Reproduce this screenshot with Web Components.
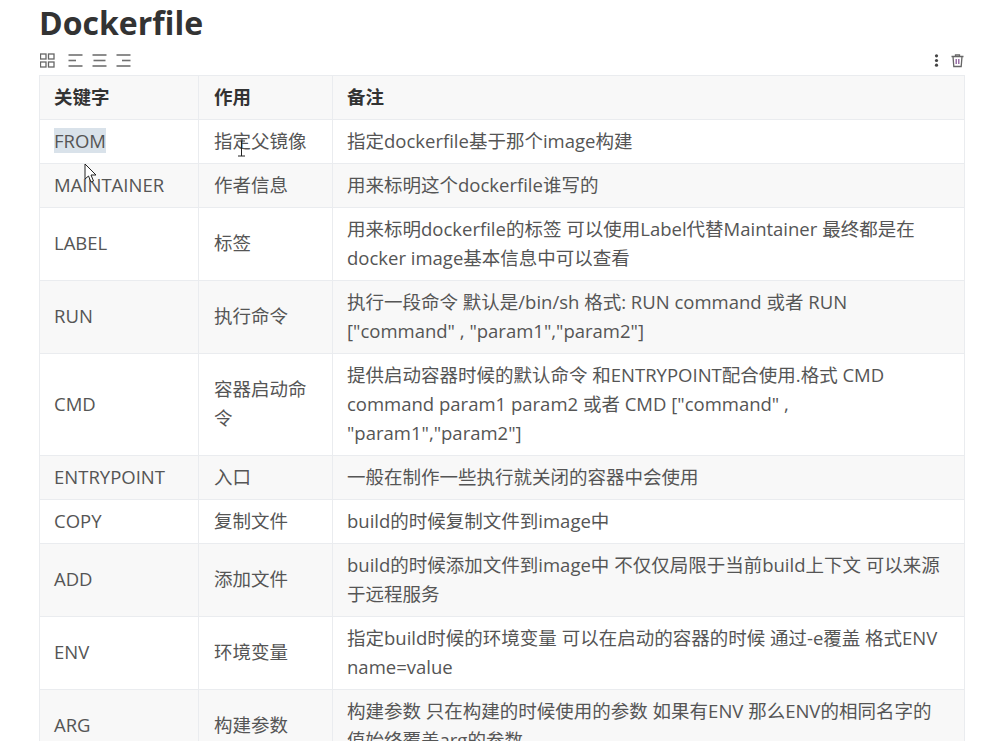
<!DOCTYPE html>
<html lang="zh">
<head>
<meta charset="utf-8">
<title>Dockerfile</title>
<style>
  html, body { margin: 0; height: 741px; overflow: hidden; background: #fff; }
  body { font-family: "Open Sans", "Noto Sans CJK SC", sans-serif; color: #333; }
</style>
</head>
<body>
<doc-sheet>
  <doc-title>Dockerfile</doc-title>
  <table-tools></table-tools>
  <keyword-table></keyword-table>
</doc-sheet>

<script>
const FONT = '"Open Sans", "Noto Sans CJK SC", sans-serif'

class DocSheet extends HTMLElement {
  constructor () {
    super()
    this.attachShadow({ mode: 'open' }).innerHTML = `
      <style>
        :host { display: block; position: relative; padding: 0 22px 0 39px; }
      </style>
      <slot></slot>
      `
  }
}

class DocTitle extends HTMLElement {
  constructor () {
    super()
    this.attachShadow({ mode: 'open' }).innerHTML = `
      <style>
        :host {
          display: block;
          height: 46px;
          font: 700 32px/46px ${FONT};
          color: #333;
        }
      </style>
      <slot></slot>
      `
  }
}

class TableTools extends HTMLElement {
  constructor () {
    super()
    const line = (x1, x2, y) => `<path d="M${x1} ${y}H${x2}"/>`
    this.attachShadow({ mode: 'open' }).innerHTML = `
      <style>
        :host {
          display: flex;
          align-items: center;
          height: 29px;
          padding: 0 0 0 1px;
          box-sizing: border-box;
        }
        svg { display: block; width: 15px; height: 15px; fill: none; stroke: #666; stroke-width: 1.3; }
        .group { display: flex; align-items: center; }
        .aligns { margin-left: 13px; gap: 9px; }
        .aligns svg { stroke-width: 1.6; stroke: #707070; }
        .right { margin-left: auto; gap: 6px; }
        .dots { fill: #444; stroke: none; }
      </style>
      <div class="group">
        <svg viewBox="0 0 15 15"><rect x="0.5" y="1" width="5.5" height="5"/><rect x="8.5" y="1" width="5.5" height="5"/><rect x="0.5" y="9" width="5.5" height="5"/><rect x="8.5" y="9" width="5.5" height="5"/></svg>
      </div>
      <div class="group aligns">
        <svg viewBox="0 0 15 15">${line(0.5, 14.5, 2)}${line(0.5, 8, 7.5)}${line(0.5, 14.5, 13)}</svg>
        <svg viewBox="0 0 15 15">${line(0.5, 14.5, 2)}${line(1.5, 13.5, 7.5)}${line(0.5, 14.5, 13)}</svg>
        <svg viewBox="0 0 15 15">${line(0.5, 14.5, 2)}${line(6, 14.5, 7.5)}${line(0.5, 14.5, 13)}</svg>
      </div>
      <div class="group right">
        <svg class="dots" viewBox="0 0 15 15"><circle cx="7.5" cy="2.8" r="1.6"/><circle cx="7.5" cy="7.5" r="1.6"/><circle cx="7.5" cy="12.2" r="1.6"/></svg>
        <svg viewBox="0 0 15 15"><path d="M1.5 3.5H13.5M5.5 3.5V1.8H9.5V3.5M3 3.5L3.8 13.5H11.2L12 3.5"/><path d="M6.2 6V11M8.8 6V11" stroke="#8a5a9a"/></svg>
      </div>
      `
  }
}

const ROWS = [
  ['FROM', '指定父镜像', '指定dockerfile基于那个image构建'],
  ['MAINTAINER', '作者信息', '用来标明这个dockerfile谁写的'],
  ['LABEL', '标签', '用来标明dockerfile的标签 可以使用Label代替Maintainer 最终都是在docker image基本信息中可以查看'],
  ['RUN', '执行命令', '执行一段命令 默认是/bin/sh 格式: RUN command 或者 RUN ["command" , "param1","param2"]'],
  ['CMD', '容器启动命令', '提供启动容器时候的默认命令 和ENTRYPOINT配合使用.格式 CMD command param1 param2 或者 CMD ["command" , "param1","param2"]'],
  ['ENTRYPOINT', '入口', '一般在制作一些执行就关闭的容器中会使用'],
  ['COPY', '复制文件', 'build的时候复制文件到image中'],
  ['ADD', '添加文件', 'build的时候添加文件到image中 不仅仅局限于当前build上下文 可以来源于远程服务'],
  ['ENV', '环境变量', '指定build时候的环境变量 可以在启动的容器的时候 通过-e覆盖 格式ENV name=value'],
  ['ARG', '构建参数', '构建参数 只在构建的时候使用的参数 如果有ENV 那么ENV的相同名字的值始终覆盖arg的参数']
]

class KeywordTable extends HTMLElement {
  constructor () {
    super()
    const rows = ROWS.map(([key, use, note], i) => `
      <tr>
        <td>${i === 0 ? `<span class="picked">${key}</span>` : key}</td>
        <td>${use}</td>
        <td>${note}</td>
      </tr>`).join('')
    this.attachShadow({ mode: 'open' }).innerHTML = `
      <style>
        :host { display: block; position: relative; font: 400 18.5px/29px ${FONT}; color: #555; }
        /* separate borders so the cells land on whole pixels */
        table { width: 926px; border-collapse: separate; border-spacing: 0; table-layout: fixed; border: solid #eaecef; border-width: 1px 0 0 1px; }
        th, td { border: solid #eaecef; border-width: 0 1px 1px 0; padding: 6px 15px 8px 14px; text-align: left; vertical-align: middle; }
        th:nth-child(2), td:nth-child(2) { padding-left: 15px; }
        /* the centred columns round up otherwise */
        td:nth-child(1), td:nth-child(2) { padding-top: 5.6px; padding-bottom: 8.4px; }
        th { font-weight: 700; color: #333; }
        thead tr, tbody tr:nth-child(even) { background: #f8f8f8; }
        .picked { background: #d9e2ea; }
        .cursor { position: absolute; display: block; }
      </style>
      <table>
        <colgroup><col style="width:159px"><col style="width:134px"><col></colgroup>
        <thead><tr><th>关键字</th><th>作用</th><th>备注</th></tr></thead>
        <tbody>${rows}</tbody>
      </table>
      <svg class="cursor" style="left:45px;top:88px" width="14" height="21" viewBox="0 0 14 21"><path d="M1 1V16L4.5 13L7 19L9.5 18L7 12H12Z" fill="#fff" stroke="#222" stroke-width="1"/></svg>
      <svg class="cursor" style="left:198px;top:65px" width="9" height="17" viewBox="0 0 9 17"><path d="M1 1H8M4.5 1V16M1 16H8" fill="none" stroke="#222" stroke-width="1"/></svg>
      `
  }
}

customElements.define('doc-sheet', DocSheet)
customElements.define('doc-title', DocTitle)
customElements.define('table-tools', TableTools)
customElements.define('keyword-table', KeywordTable)
</script>
</body>
</html>
